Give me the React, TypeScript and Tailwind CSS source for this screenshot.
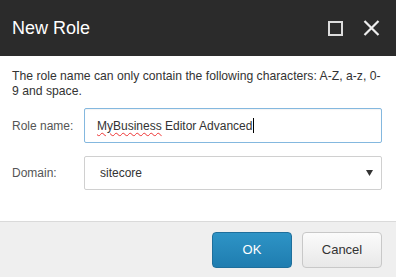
export default function App() {
  return (
    <div className="flex h-[277px] w-[396px] flex-col overflow-hidden bg-white font-['Liberation_Sans',Arial,sans-serif]">
      <div className="flex h-[56px] shrink-0 items-center bg-[#2b2b2b] pl-3 pr-4">
        <h1 className="text-[18px] leading-none text-white">New Role</h1>
        <div className="ml-auto flex items-center gap-[20px]">
          <svg width="15" height="15" viewBox="0 0 15 15">
            <rect x="1" y="1" width="13" height="13" fill="none" stroke="#dcdcdc" strokeWidth="2" />
          </svg>
          <svg width="17" height="16" viewBox="0 0 17 16">
            <path d="M1.5 1 L15.5 15 M15.5 1 L1.5 15" stroke="#ededed" strokeWidth="2.2" />
          </svg>
        </div>
      </div>

      <div className="flex-1 px-3 pt-[13px]">
        <p className="text-[12.2px] leading-[15px] text-[#333]">
          The role name can only contain the following characters: A-Z, a-z, 0-
          <br />9 and space.
        </p>

        <div className="mt-[9px] flex items-center">
          <label className="w-[72px] text-[12px] text-[#555]">Role name:</label>
          <div className="flex h-[35px] w-[298px] items-center rounded-[2px] border border-[#84b8df] px-3 text-[12px] text-[#333] shadow-[inset_0_1px_1px_rgba(0,0,0,0.05)]">
            <span className="underline decoration-[#e33] decoration-wavy decoration-1 underline-offset-2">
              MyBusiness
            </span>
            <span>&nbsp;Editor Advanced</span>
            <span className="ml-px h-[15px] w-px bg-black" />
          </div>
        </div>

        <div className="mt-[13px] flex items-center">
          <label className="w-[72px] text-[12px] text-[#555]">Domain:</label>
          <div className="flex h-[34px] w-[298px] items-center rounded-[2px] border border-[#d0d0d0] pl-[15px] pr-[8px] text-[12px] text-[#333]">
            <span>sitecore</span>
            <svg className="ml-auto" width="7" height="6" viewBox="0 0 7 6">
              <path d="M0 0 H7 L3.5 6 Z" fill="#333" />
            </svg>
          </div>
        </div>
      </div>

      <div className="flex h-[56px] shrink-0 items-center justify-end gap-[10px] border-t border-[#dadada] bg-[#efefef] pr-[14px]">
        <button className="h-[36px] w-[80px] rounded-[4px] border border-[#1e6f9c] bg-gradient-to-b from-[#2e94c6] to-[#1f7db0] text-[13px] text-white">
          OK
        </button>
        <button className="h-[36px] w-[80px] rounded-[4px] border border-[#c8c8c8] bg-gradient-to-b from-[#fbfbfb] to-[#e8e8e8] text-[13px] text-[#333]">
          Cancel
        </button>
      </div>
    </div>
  );
}
